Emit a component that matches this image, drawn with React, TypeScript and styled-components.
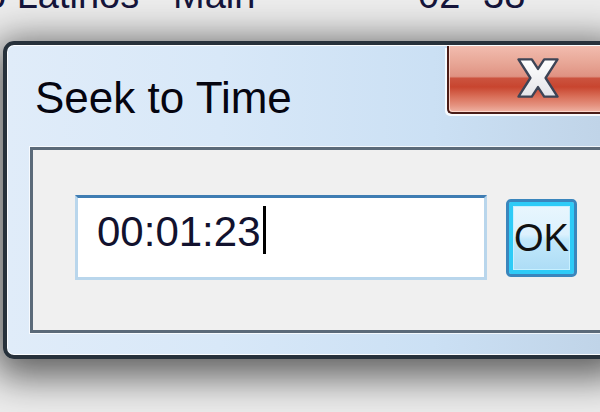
import React from "react";
import styled, { createGlobalStyle } from "styled-components";

const Global = createGlobalStyle`
  html, body { margin: 0; padding: 0; background: #e8e8e8; }
  body { font-family: "Liberation Sans", Arial, sans-serif; }
  * { box-sizing: border-box; }
`;

const Screen = styled.div`
  position: relative;
  width: 600px;
  height: 412px;
  overflow: hidden;
  background: #ececec;
`;

const BehindRow = styled.div`
  display: flex;
  align-items: flex-end;
  height: 9px;
  overflow: hidden;
  margin-left: -15px;
`;

const BehindCell = styled.span<{ $w?: number }>`
  flex: 0 0 ${(p) => (p.$w ? `${p.$w}px` : "auto")};
  white-space: nowrap;
  font-family: "Liberation Sans", Arial, sans-serif;
  font-size: 38px;
  line-height: 27px;
  color: #14143a;
`;

const Window = styled.div`
  display: flex;
  flex-direction: column;
  width: 616px;
  height: 318px;
  margin: 32px 0 0 3px;
  border: 4px solid #27313b;
  border-radius: 11px;
  background: linear-gradient(
    90deg,
    #e0ecf9 0%,
    #d8e8f8 35%,
    #cbe0f4 70%,
    #bfd3e7 100%
  );
  box-shadow: 0 9px 38px 9px rgba(0, 0, 0, 0.6),
    inset 0 0 0 1px rgba(255, 255, 255, 0.9);
`;

const TitleBar = styled.div`
  display: flex;
  align-items: flex-start;
  height: 102px;
  flex-shrink: 0;
`;

const Title = styled.div`
  flex: 1;
  padding: 28px 0 0 28px;
  font-family: "Liberation Sans", Arial, sans-serif;
  font-size: 44px;
  line-height: 50px;
  color: #050510;
  white-space: nowrap;
`;

const CloseButton = styled.div`
  display: flex;
  align-items: flex-start;
  width: 160px;
  height: 68px;
  margin: 1px 8px 0 0;
  padding: 12px 0 0 68px;
  border-left: 2px solid #4a1c17;
  border-bottom: 2px solid #4a1c17;
  border-bottom-left-radius: 5px;
  background: linear-gradient(
    180deg,
    #f2bcaf 0%,
    #e8a797 25%,
    #df9282 46%,
    #cb533f 49%,
    #c8452f 62%,
    #d86d57 76%,
    #e5927f 90%,
    #efb3a4 100%
  );
  box-shadow: -2px 2px 0 rgba(255, 255, 255, 0.85),
    inset 1px -1px 0 rgba(255, 225, 215, 0.8);
`;

const Client = styled.div`
  flex: 1;
  display: flex;
  align-items: flex-start;
  margin: 0 0 22px 23px;
  padding: 45px 0 0 42px;
  border: 3px solid #5b6a79;
  border-right: none;
  background: #f0f0f0;
  box-shadow: 0 0 0 1px rgba(255, 255, 255, 0.75);
`;

const FieldRow = styled.div`
  display: flex;
  align-items: center;
  gap: 19px;
  height: 85px;
`;

const TimeField = styled.div`
  display: flex;
  align-items: flex-start;
  width: 412px;
  height: 85px;
  padding: 8px 0 0 19px;
  background: #ffffff;
  border: 3px solid #b9d6ec;
  border-top-color: #3f7db3;
`;

const TimeValue = styled.span`
  margin-top: 2px;
  font-family: "Liberation Sans", Arial, sans-serif;
  font-size: 42px;
  line-height: 48px;
  color: #12122e;
`;

const Caret = styled.span`
  width: 3px;
  height: 48px;
  margin-left: 2px;
  background: #000;
`;

const OkButton = styled.button`
  display: flex;
  align-items: center;
  justify-content: center;
  width: 71px;
  height: 78px;
  padding: 0;
  border: 3px solid #3a86bd;
  border-radius: 5px;
  background: linear-gradient(
    180deg,
    #eaf7fe 0%,
    #dcf1fd 45%,
    #c2e8fb 52%,
    #aadbf5 100%
  );
  box-shadow: inset 0 0 0 4px #2ecbf7, inset 0 0 0 5px #c8f0ff;
  font-family: "Liberation Sans", Arial, sans-serif;
  font-size: 38px;
  line-height: 1;
  color: #111;
`;

const CloseGlyph = () => (
  <svg width="42" height="40" viewBox="-1.5 -1.5 44 42">
    <defs>
      <linearGradient id="xg" x1="0" y1="0" x2="0" y2="1">
        <stop offset="0" stopColor="#ffffff" />
        <stop offset="1" stopColor="#e4e4e8" />
      </linearGradient>
    </defs>
    <polygon
      points="0,0 14,0 20.5,10 27,0 41,0 28.5,19.5 41,39 27,39 20.5,29 14,39 0,39 12.5,19.5"
      fill="url(#xg)"
      stroke="#3d4456"
      strokeWidth="2.5"
      strokeLinejoin="round"
    />
  </svg>
);

export default function App() {
  return (
    <>
      <Global />
      <Screen>
        <BehindRow>
          <BehindCell $w={433}>o Latinos - Main</BehindCell>
          <BehindCell $w={65}>02</BehindCell>
          <BehindCell>38</BehindCell>
        </BehindRow>
        <Window>
          <TitleBar>
            <Title>Seek to Time</Title>
            <CloseButton>
              <CloseGlyph />
            </CloseButton>
          </TitleBar>
          <Client>
            <FieldRow>
              <TimeField>
                <TimeValue>00:01:23</TimeValue>
                <Caret />
              </TimeField>
              <OkButton>OK</OkButton>
            </FieldRow>
          </Client>
        </Window>
      </Screen>
    </>
  );
}
